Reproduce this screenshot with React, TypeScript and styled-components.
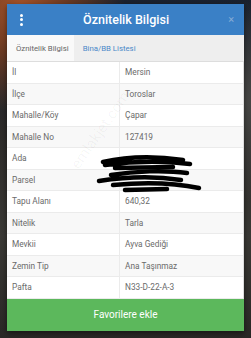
import styled, { createGlobalStyle } from 'styled-components'

const rows: [string, string][] = [
  ['İl', 'Mersin'],
  ['İlçe', 'Toroslar'],
  ['Mahalle/Köy', 'Çapar'],
  ['Mahalle No', '127419'],
  ['Ada', ''],
  ['Parsel', ''],
  ['Tapu Alanı', '640,32'],
  ['Nitelik', 'Tarla'],
  ['Mevkii', 'Ayva Gediği'],
  ['Zemin Tip', 'Ana Taşınmaz'],
  ['Pafta', 'N33-D-22-A-3'],
]

export default function App() {
  return (
    <>
      <Global />
      <Backdrop>
        <Modal>
          <Header>
            <Kebab>
              <span />
              <span />
              <span />
            </Kebab>
            <Title>Öznitelik Bilgisi</Title>
            <Close>×</Close>
          </Header>
          <Tabs>
            <Tab $active>Öznitelik Bilgisi</Tab>
            <Tab>Bina/BB Listesi</Tab>
          </Tabs>
          <Table>
            {rows.map(([label, value], i) => (
              <Row key={label} $striped={i % 2 === 1}>
                <Label>{label}</Label>
                <Value>{value}</Value>
              </Row>
            ))}
            <Watermark>emlakjet.com</Watermark>
            <Scribble width="110" height="44" viewBox="0 0 110 44">
              <path
                d="M8 9 C30 4 60 3 88 7 M10 12 C40 8 70 8 95 11 M20 15 L78 14"
                stroke="#000"
                strokeWidth="4.5"
                strokeLinecap="round"
                fill="none"
              />
              <path
                d="M16 22 C40 18 70 17 92 20 M4 28 C30 24 60 23 86 27 M18 32 C50 29 80 30 104 35 M30 37 L72 36"
                stroke="#000"
                strokeWidth="4.5"
                strokeLinecap="round"
                fill="none"
              />
            </Scribble>
          </Table>
          <Button>Favorilere ekle</Button>
        </Modal>
      </Backdrop>
    </>
  )
}

const Global = createGlobalStyle`
  html, body {
    margin: 0;
    padding: 0;
  }
  body {
    font-family: Roboto, "Liberation Sans", sans-serif;
  }
`

const Backdrop = styled.div`
  width: 251px;
  height: 338px;
  box-sizing: border-box;
  padding: 4px 7px 0 7px;
  background:
    radial-gradient(circle at 8% 2%, #a8542a 0, #6b3a22 12%, transparent 26%),
    radial-gradient(circle at 95% 30%, #4a4a48 0, transparent 30%),
    linear-gradient(180deg, #1a2230 0%, #2e2c2a 40%, #3b3a36 70%, #2a2826 100%);
`

const Modal = styled.div`
  display: flex;
  flex-direction: column;
  background: #fff;
  box-shadow: 0 2px 6px rgba(0, 0, 0, 0.5);
`

const Header = styled.div`
  height: 31px;
  background: #3a80c6;
  display: flex;
  align-items: center;
  padding: 0 10px 0 13px;
  color: #fff;
`

const Kebab = styled.div`
  width: 4px;
  display: flex;
  flex-direction: column;
  gap: 1.5px;
  & span {
    width: 3px;
    height: 3px;
    border-radius: 50%;
    background: #fff;
  }
`

const Title = styled.div`
  flex: 1;
  text-align: center;
  font-size: 12.5px;
  font-weight: 500;
`

const Close = styled.div`
  font-size: 11px;
  color: #86acd6;
  line-height: 1;
`

const Tabs = styled.div`
  height: 27px;
  display: flex;
  background: #eeeeee;
  border-bottom: 1px solid #dddddd;
  box-sizing: border-box;
`

const Tab = styled.div<{ $active?: boolean }>`
  display: flex;
  align-items: center;
  padding: 0 5px 0 9px;
  font-size: 7.8px;
  font-weight: 400;
  color: ${(p) => (p.$active ? '#666' : '#4a88c8')};
  background: ${(p) => (p.$active ? '#f9f9f9' : 'transparent')};
`

const Table = styled.div`
  position: relative;
  overflow: hidden;
  display: flex;
  flex-direction: column;
  border-right: 1px solid #dddddd;
`

const Row = styled.div<{ $striped: boolean }>`
  height: 21.5px;
  box-sizing: border-box;
  display: grid;
  grid-template-columns: 113px 1fr;
  border-bottom: 1px solid #ebebeb;
  background: ${(p) => (p.$striped ? '#f8f8f8' : '#fff')};
  font-size: 8.3px;
  color: #6a6a6a;
`

const Label = styled.div`
  display: flex;
  align-items: center;
  padding-left: 5px;
  border-right: 1px solid #ebebeb;
`

const Value = styled.div`
  display: flex;
  align-items: center;
  padding-left: 5px;
`

const Watermark = styled.div`
  position: absolute;
  left: 60px;
  top: 100px;
  font-size: 15px;
  color: rgba(0, 0, 0, 0.04);
  transform: rotate(-55deg);
  transform-origin: left top;
  white-space: nowrap;
  pointer-events: none;
`

const Scribble = styled.svg`
  position: absolute;
  left: 88px;
  top: 91px;
`

const Button = styled.div`
  height: 32px;
  background: #5cb85c;
  color: #fff;
  font-size: 10px;
  display: flex;
  align-items: center;
  justify-content: center;
`
